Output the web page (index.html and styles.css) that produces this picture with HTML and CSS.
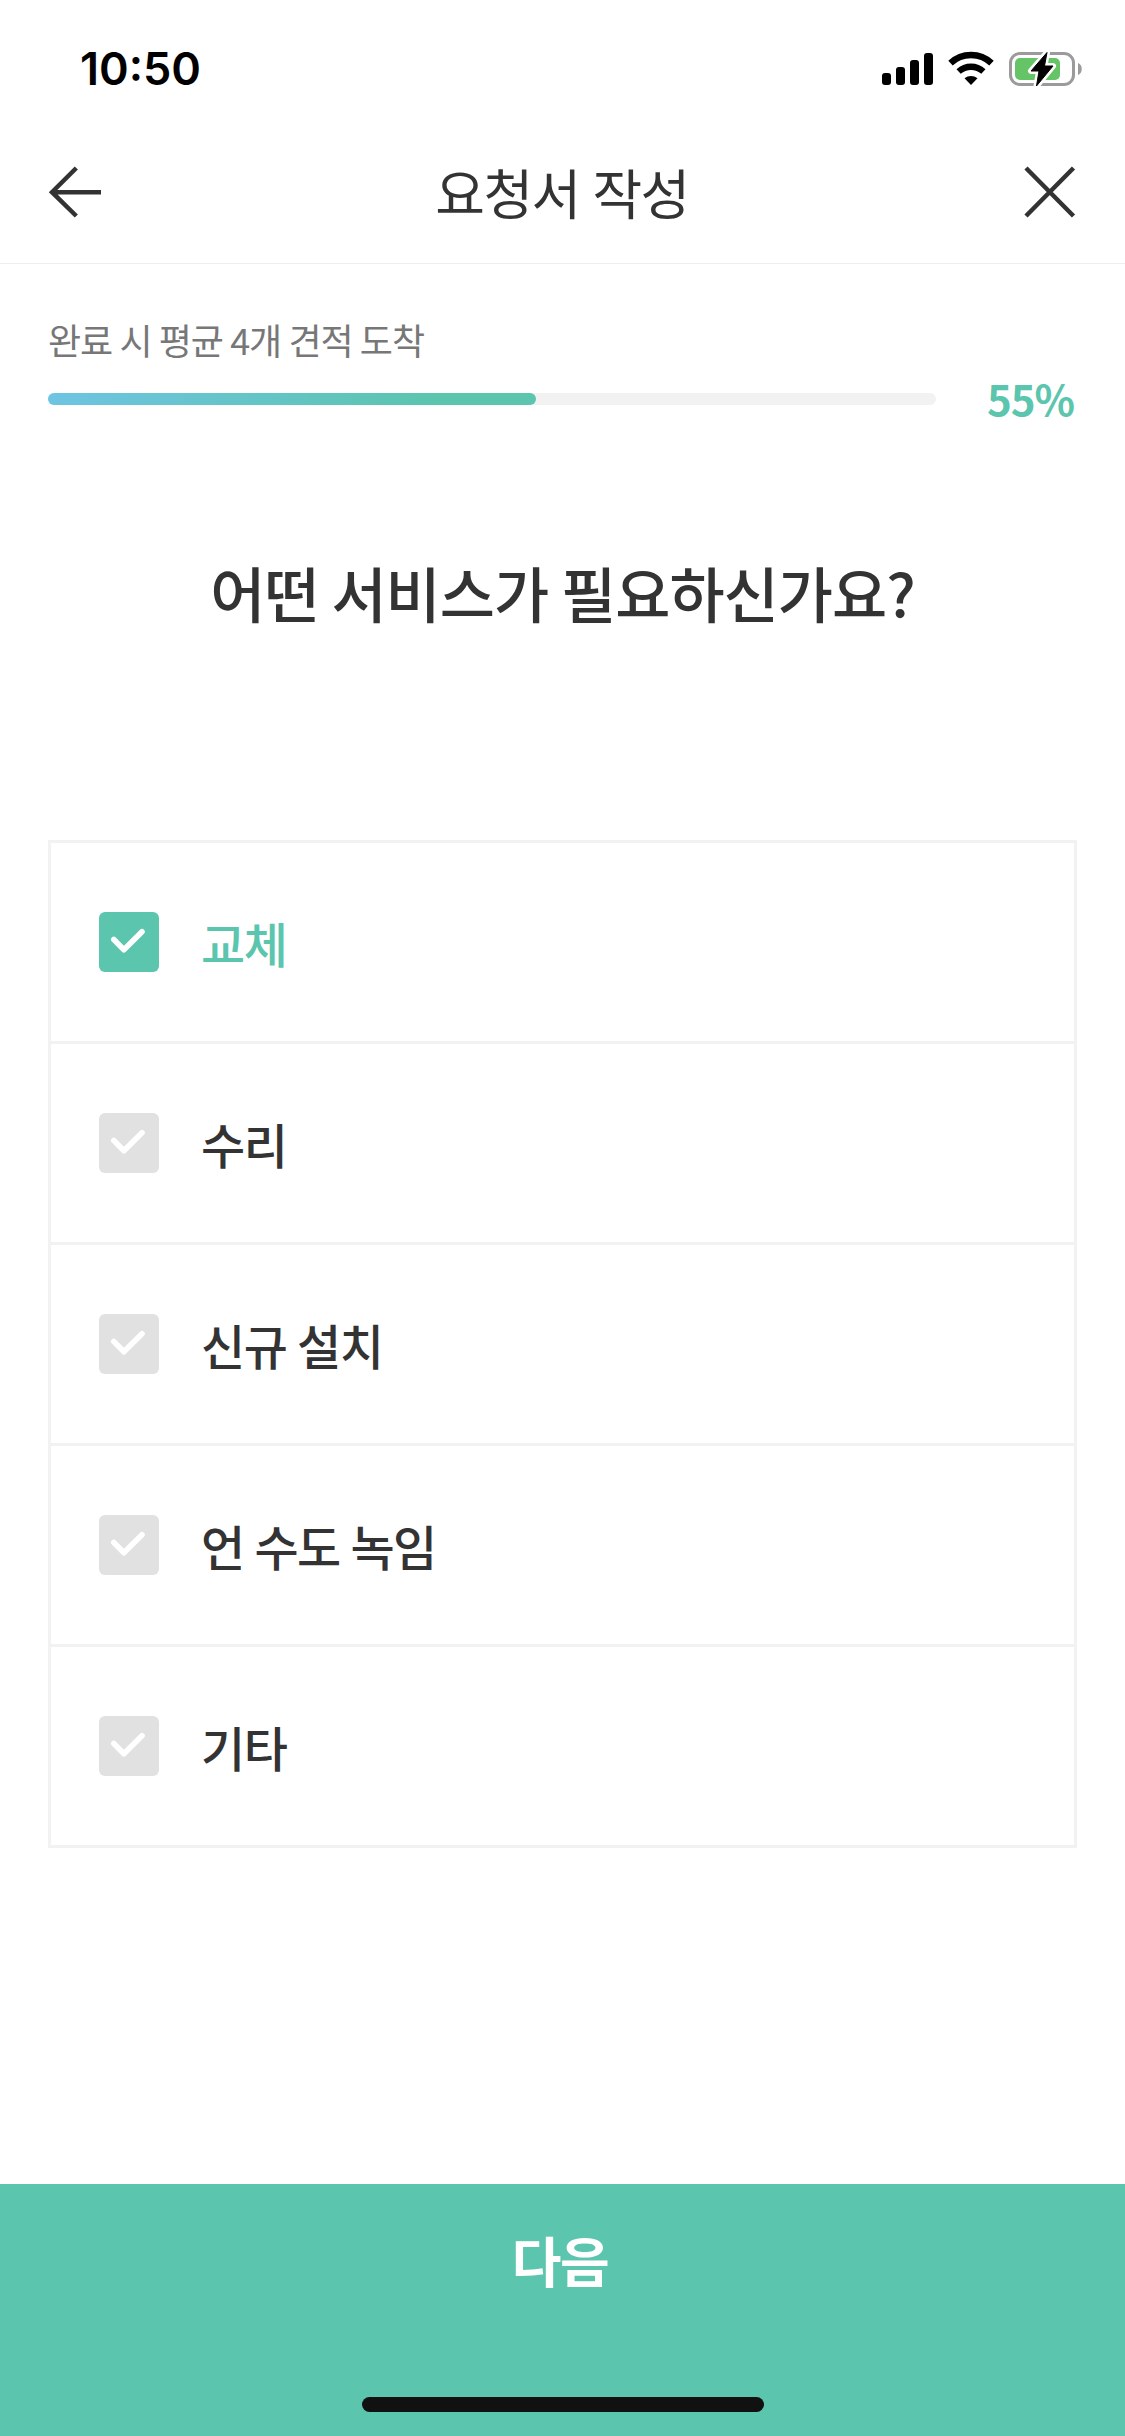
FILE: index.html
```html
<!DOCTYPE html>
<html lang="ko">
<head>
<meta charset="utf-8">
<title>요청서 작성</title>
<link rel="stylesheet" href="styles.css">
</head>
<body>
<div class="screen">
  <div class="status-bar">
    <span class="time">10:50</span>
    <svg class="status-icons" width="202" height="40" viewBox="0 0 202 40" aria-hidden="true">
      <rect x="0" y="24" width="9" height="12" rx="3"/>
      <rect x="14" y="18" width="9" height="18" rx="3"/>
      <rect x="28" y="11" width="9" height="25" rx="3"/>
      <rect x="42" y="4" width="9" height="32" rx="3"/>
      <g fill="none" stroke="#000">
        <path d="M68.500 14.200A30 30 0 0 1 109.500 14.200" stroke-width="6.500"/>
        <path d="M76.600 22.500A18.500 18.500 0 0 1 101.400 22.500" stroke-width="6.300"/>
      </g>
      <path d="M82.500 29.200a10.500 10.500 0 0 1 13 0L89 36Z"/>
      <rect x="128.500" y="4.500" width="63" height="31" rx="9.500" fill="none" stroke="#9b9b9b" stroke-width="3"/>
      <rect x="133" y="9" width="45" height="22" rx="5" fill="#65c466"/>
      <path d="M196 14c5 1.500 5 10.500 0 12Z" fill="#9b9b9b"/>
      <path d="M165 3.500L149 22h8l-2.500 15L171 17h-8.500Z" stroke="#fff" stroke-width="6" stroke-linejoin="round"/>
      <path d="M165 3.500L149 22h8l-2.500 15L171 17h-8.500Z" stroke="#000" stroke-width="1" stroke-linejoin="round"/>
    </svg>
  </div>

  <header class="nav-bar">
    <svg class="nav-icon" width="54" height="54" viewBox="0 0 54 54" aria-label="뒤로">
      <path d="M28.300 3L4 27.200L28.300 51M4 27.200H53"/>
    </svg>
    <h1 class="nav-title">요청서 작성</h1>
    <svg class="nav-icon" width="54" height="54" viewBox="0 0 54 54" aria-label="닫기">
      <path d="M3 3L50.500 51M50.500 3L3 51"/>
    </svg>
  </header>

  <main class="content">
    <p class="progress-note">완료 시 평균 4개 견적 도착</p>
    <div class="progress">
      <div class="progress-track"><div class="progress-fill" style="width:55%"></div></div>
      <span class="progress-value">55%</span>
    </div>

    <h2 class="question">어떤 서비스가 필요하신가요?</h2>

    <ul class="options">
      <li class="option option-selected">
        <span class="checkbox"><svg viewBox="0 0 60 60"><path d="M14.800 27.500l10.100 10.200L43 19.800"/></svg></span>
        <span class="label">교체</span>
      </li>
      <li class="option">
        <span class="checkbox"><svg viewBox="0 0 60 60"><path d="M14.800 27.500l10.100 10.200L43 19.800"/></svg></span>
        <span class="label">수리</span>
      </li>
      <li class="option">
        <span class="checkbox"><svg viewBox="0 0 60 60"><path d="M14.800 27.500l10.100 10.200L43 19.800"/></svg></span>
        <span class="label">신규 설치</span>
      </li>
      <li class="option">
        <span class="checkbox"><svg viewBox="0 0 60 60"><path d="M14.800 27.500l10.100 10.200L43 19.800"/></svg></span>
        <span class="label">언 수도 녹임</span>
      </li>
      <li class="option">
        <span class="checkbox"><svg viewBox="0 0 60 60"><path d="M14.800 27.500l10.100 10.200L43 19.800"/></svg></span>
        <span class="label">기타</span>
      </li>
    </ul>
  </main>

  <footer class="next-bar">
    <span class="next-label">다음</span>
    <div class="home-indicator"></div>
  </footer>
</div>
</body>
</html>
```
FILE: styles.css
```css
* {
  box-sizing: border-box;
  margin: 0;
  padding: 0;
}

body {
  background: #fff;
  color: #333;
  font-family: "Noto Sans CJK KR", sans-serif;
}

.screen {
  display: flex;
  flex-direction: column;
  width: 1125px;
  height: 2436px;
  overflow: hidden;
}

.status-bar {
  display: flex;
  justify-content: space-between;
  align-items: flex-start;
  height: 132px;
  padding: 49px 41px 0 80px;
}

.time {
  color: #000;
  font: 600 45px/40px Inter, sans-serif;
}

.nav-bar {
  display: flex;
  justify-content: space-between;
  align-items: center;
  height: 132px;
  padding: 0 48px 12px;
  border-bottom: 1px solid #eee;
}

.nav-icon {
  fill: none;
  stroke: #333;
  stroke-width: 4.5;
}

.nav-title {
  padding: 1px 1px 0 0;
  font-size: 54px;
  font-weight: 400;
  line-height: 80px;
  letter-spacing: -1.5px;
  word-spacing: -1px;
}

.content {
  display: flex;
  flex-direction: column;
  flex: 1;
  padding: 48px 48px 0;
}

.progress-note {
  color: #777;
  font-size: 36px;
  line-height: 54px;
  letter-spacing: -1px;
  word-spacing: -1.9px;
}

.progress {
  display: flex;
  justify-content: space-between;
  align-items: center;
  height: 60px;
  margin-top: 3px;
}

.progress-track {
  width: 888px;
  height: 12px;
  border-radius: 6px;
  background: #f2f2f2;
}

.progress-fill {
  height: 100%;
  border-radius: 6px;
  background: linear-gradient(90deg, #6ec4e2, #5bc5ae 80%);
}

.progress-value {
  padding: 0 3px 3px 0;
  color: #5bc5ae;
  font-size: 42px;
  font-weight: 700;
  line-height: 60px;
  letter-spacing: -1px;
}

.question {
  margin-top: 118px;
  font-size: 60px;
  font-weight: 500;
  line-height: 90px;
  letter-spacing: -1px;
  word-spacing: -3px;
  text-align: center;
}

.options {
  margin-top: 203px;
  border: 3px solid #f2f2f2;
  list-style: none;
}

.option {
  display: flex;
  align-items: center;
  gap: 42px;
  height: 201px;
  padding: 0 48px;
  border-bottom: 3px solid #f2f2f2;
}

.option:last-child {
  height: 198px;
  border-bottom: 0;
}

.checkbox {
  width: 60px;
  height: 60px;
  border-radius: 6px;
  background: #e1e1e1;
}

.checkbox svg {
  display: block;
  fill: none;
  stroke: #fff;
  stroke-width: 5.6;
  stroke-linecap: round;
  stroke-linejoin: round;
}

.label {
  font-size: 48px;
  font-weight: 500;
  line-height: 72px;
  letter-spacing: -1.5px;
  word-spacing: -1.2px;
}

.option-selected .checkbox {
  background: #5bc5ae;
}

.option-selected .label {
  color: #5bc5ae;
}

.next-bar {
  display: flex;
  flex-direction: column;
  align-items: center;
  justify-content: space-between;
  height: 252px;
  padding: 36px 0 24px;
  background: #5bc5ae;
}

.next-label {
  padding-right: 5px;
  color: #fff;
  font-size: 54px;
  font-weight: 700;
  line-height: 80px;
  letter-spacing: -1.5px;
}

.home-indicator {
  width: 402px;
  height: 15px;
  border-radius: 8px;
  background: #111;
}
```
